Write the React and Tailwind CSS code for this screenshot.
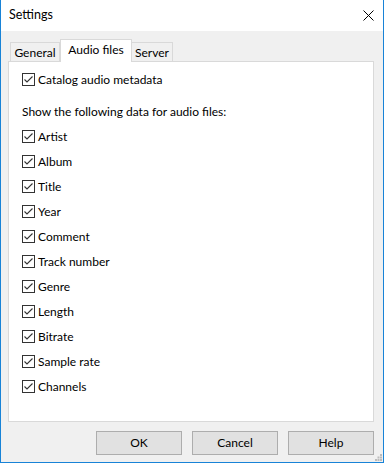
import React from "react";

const font = { fontFamily: 'Lato, "Noto Sans", sans-serif' };

function Check({ label }) {
  return (
    <div className="flex h-[25px] items-center">
      <div className="flex h-[13px] w-[13px] items-center justify-center border border-[#333333] bg-white">
        <svg width="11" height="11" viewBox="0 0 11 11">
          <polyline points="1.5,5.5 4,8 9.5,2.5" fill="none" stroke="#333333" strokeWidth="1.1" />
        </svg>
      </div>
      <span className="ml-[3px] text-[12px] leading-none text-black">{label}</span>
    </div>
  );
}

const items = [
  "Artist",
  "Album",
  "Title",
  "Year",
  "Comment",
  "Track number",
  "Genre",
  "Length",
  "Bitrate",
  "Sample rate",
  "Channels",
];

export default function App() {
  return (
    <div
      style={font}
      className="flex h-[463px] w-[384px] flex-col overflow-hidden border-x border-b border-[#1883d7] bg-[#f0f0f0] text-black"
    >
      <div className="flex h-[31px] shrink-0 items-center justify-between bg-white pl-[8px] pr-[9px]">
        <span className="text-[12.5px] leading-none">Settings</span>
        <svg width="11" height="11" viewBox="0 0 11 11" className="mb-[1px]">
          <path d="M0.5 0.5 L10.5 10.5 M10.5 0.5 L0.5 10.5" stroke="#000" strokeWidth="1" />
        </svg>
      </div>
      <div className="relative flex flex-1 flex-col pl-[7px] pr-[9px] pt-[8px] pb-[7px]">
        <div className="ml-[2px] flex h-[22px] items-end">
          <div className="flex h-[19px] w-[50px] items-center justify-center border-x border-t border-[#d9d9d9] bg-[#f0f0f0] pt-[1px] text-[12px] leading-none">
            General
          </div>
          <div className="relative z-10 mb-[-1px] flex h-[23px] w-[72px] items-start justify-center border-x border-t border-[#d9d9d9] bg-white pt-[4px] text-[12px] leading-none">
            Audio files
          </div>
          <div className="flex h-[19px] w-[41px] items-center justify-center border-r border-t border-[#d9d9d9] bg-[#f0f0f0] pt-[1px] text-[12px] leading-none">
            Server
          </div>
        </div>
        <div className="flex flex-1 flex-col border border-[#d9d9d9] bg-white pl-[13px] pt-[5px]">
          <Check label="Catalog audio metadata" />
          <div className="mt-[7px] flex h-[25px] items-center text-[12px] leading-none">
            Show the following data for audio files:
          </div>
          {items.map((it) => (
            <Check key={it} label={it} />
          ))}
        </div>
        <div className="mt-[9px] flex h-[24px] justify-end gap-[10px]">
          {["OK", "Cancel", "Help"].map((b) => (
            <div
              key={b}
              className="flex w-[86px] items-center justify-center border border-[#adadad] bg-[#e1e1e1] text-[12px] leading-none"
            >
              {b}
            </div>
          ))}
        </div>
        <svg className="absolute bottom-[1px] right-[1px]" width="7" height="7" viewBox="0 0 7 7">
          <rect x="5" y="0" width="2" height="2" fill="#bcbcbc" />
          <rect x="2.5" y="2.5" width="2" height="2" fill="#bcbcbc" />
          <rect x="5" y="2.5" width="2" height="2" fill="#bcbcbc" />
          <rect x="0" y="5" width="2" height="2" fill="#bcbcbc" />
          <rect x="2.5" y="5" width="2" height="2" fill="#bcbcbc" />
          <rect x="5" y="5" width="2" height="2" fill="#bcbcbc" />
        </svg>
      </div>
    </div>
  );
}
